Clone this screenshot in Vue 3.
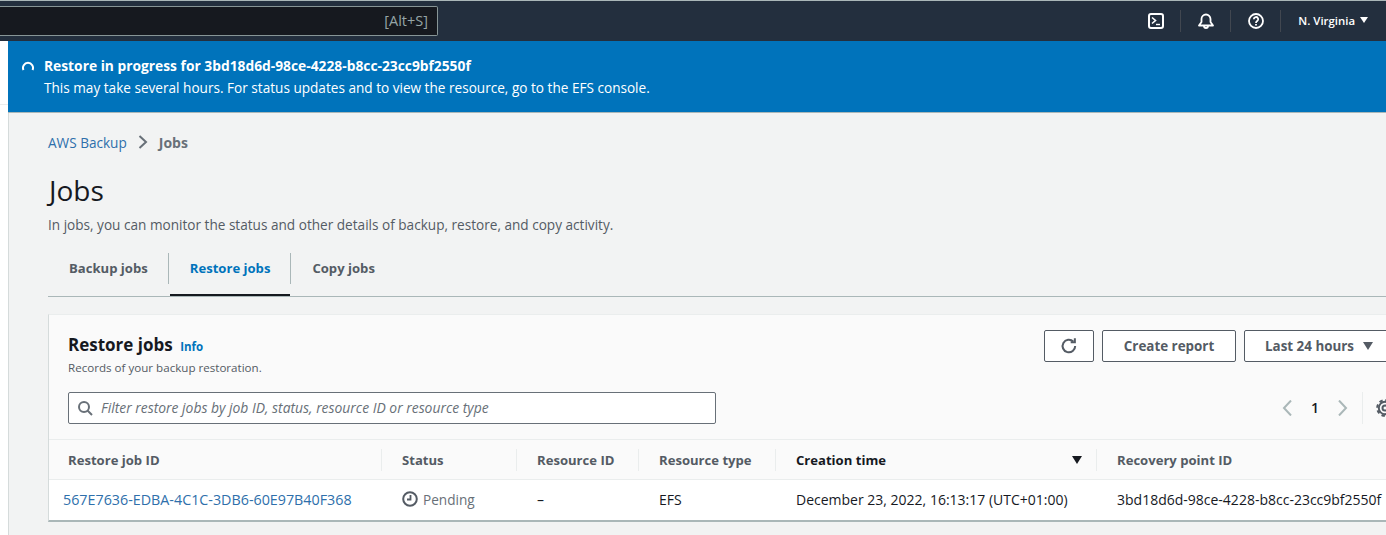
<script setup>
const columns = [
  { label: 'Restore job ID', width: 332 },
  { label: 'Status', width: 135 },
  { label: 'Resource ID', width: 122 },
  { label: 'Resource type', width: 137 },
  { label: 'Creation time', width: 321, sorted: true },
  { label: 'Recovery point ID', width: 300 },
]
const gridColumns = columns.map((c) => c.width + 'px').join(' ')
</script>

<template>
  <div class="page">
    <header class="topbar">
      <div class="search"><span class="shortcut">[Alt+S]</span></div>
      <div class="top-actions">
        <span class="top-icon">
          <svg width="16" height="16" viewBox="0 0 16 16" fill="none" stroke="#fff" stroke-width="2">
            <rect x="1" y="1" width="14" height="14" rx="2" />
            <path d="M4 4.5 7.5 7.5 4 10.5" stroke-width="1.6" />
            <path d="M8 11.5h4" stroke-width="1.4" />
          </svg>
        </span>
        <span class="top-icon">
          <svg width="16" height="16" viewBox="0 0 16 16" fill="none" stroke="#fff" stroke-width="1.8">
            <path d="M1 12.500h14L12.500 9V6a4.500 4.500 0 0 0-9 0v3z" stroke-linejoin="round" />
            <path d="M6 13a2 2 0 0 0 4 0" />
          </svg>
        </span>
        <span class="top-icon">
          <svg width="16" height="16" viewBox="0 0 16 16" fill="none" stroke="#fff" stroke-width="1.8">
            <circle cx="8" cy="8" r="7" />
            <path d="M5.800 6.200a2.200 2.200 0 1 1 3.300 1.900C8.300 8.600 8 9 8 10" />
            <path d="M8 11v1.600" />
          </svg>
        </span>
        <span class="region">N. Virginia <i class="caret"></i></span>
      </div>
    </header>

    <div class="shell">
      <aside class="side"></aside>
      <main class="main">
        <section class="flash">
          <svg class="spinner" width="12" height="12" viewBox="0 0 12 12" fill="none" stroke="#fff" stroke-width="2">
            <path d="M1.500 10A5 5 0 1 1 10.500 10" />
          </svg>
          <div>
            <div class="flash-title">Restore in progress for 3bd18d6d-98ce-4228-b8cc-23cc9bf2550f</div>
            <div class="flash-text">This may take several hours. For status updates and to view the resource, go to the EFS console.</div>
          </div>
        </section>

        <div class="content">
          <nav class="crumbs">
            <a class="crumb-link">AWS Backup</a>
            <svg width="10" height="14" viewBox="0 0 10 14" fill="none" stroke="#687078" stroke-width="2">
              <path d="M1.500 1 8 7l-6.500 6" />
            </svg>
            <span class="crumb-current">Jobs</span>
          </nav>

          <h1>Jobs</h1>
          <p class="lead">In jobs, you can monitor the status and other details of backup, restore, and copy activity.</p>

          <div class="tabs">
            <div class="tab">Backup jobs</div>
            <div class="tab active">Restore jobs</div>
            <div class="tab">Copy jobs</div>
          </div>

          <section class="card">
            <div class="card-head">
              <div>
                <h2>Restore jobs <a class="info">Info</a></h2>
                <p class="card-desc">Records of your backup restoration.</p>
              </div>
              <div class="buttons">
                <button class="btn btn-icon">
                  <svg width="18" height="18" viewBox="0 0 16 16" fill="none" stroke="#545b64" stroke-width="1.8">
                    <path d="M13.500 8a5.600 5.600 0 1 1-1.700-4" />
                    <path d="M13.200 1v3.700H9.500" />
                  </svg>
                </button>
                <button class="btn btn-report">Create report</button>
                <button class="btn btn-range">Last 24 hours <i class="caret dark"></i></button>
              </div>
            </div>

            <div class="filter-row">
              <div class="filter">
                <svg width="16" height="16" viewBox="0 0 16 16" fill="none" stroke="#687078" stroke-width="2">
                  <circle cx="7" cy="7" r="5" />
                  <path d="m10.500 10.500 4.500 4.500" />
                </svg>
                <span>Filter restore jobs by job ID, status, resource ID or resource type</span>
              </div>
              <div class="pager">
                <svg width="12" height="16" viewBox="0 0 12 16" fill="none" stroke="#aab7b8" stroke-width="2"><path d="M10 .5 3 8l7 7.500" /></svg>
                <span class="page-num">1</span>
                <svg width="12" height="16" viewBox="0 0 12 16" fill="none" stroke="#aab7b8" stroke-width="2"><path d="m2 .5 7 7.500-7 7.500" /></svg>
                <span class="pager-sep"></span>
                <svg class="gear" width="18" height="18" viewBox="0 0 18 18" fill="none" stroke="#545b64">
                  <circle cx="9" cy="9" r="2.500" stroke-width="2" />
                  <circle cx="9" cy="9" r="6.200" stroke-width="2" />
                  <circle cx="9" cy="9" r="7.800" stroke-width="2" stroke-dasharray="3.500 2.630" />
                </svg>
              </div>
            </div>

            <div class="table-head" :style="{ gridTemplateColumns: gridColumns }">
              <div v-for="col in columns" :key="col.label" class="th" :class="{ sorted: col.sorted }">
                {{ col.label }}
                <i v-if="col.sorted" class="caret black"></i>
              </div>
            </div>
            <div class="table-row" :style="{ gridTemplateColumns: gridColumns }">
              <div class="td first"><a class="job-link">567E7636-EDBA-4C1C-3DB6-60E97B40F368</a></div>
              <div class="td pending">
                <svg width="16" height="16" viewBox="0 0 16 16" fill="none" stroke="#545b64" stroke-width="2">
                  <circle cx="8" cy="8" r="6.800" />
                  <path d="M8.500 4v4.500H5" stroke-width="1.800" />
                </svg>
                Pending
              </div>
              <div class="td">–</div>
              <div class="td">EFS</div>
              <div class="td">December 23, 2022, 16:13:17 (UTC+01:00)</div>
              <div class="td">3bd18d6d-98ce-4228-b8cc-23cc9bf2550f</div>
            </div>
          </section>
        </div>
      </main>
    </div>
  </div>
</template>

<style>
html,
body {
  margin: 0;
  overflow: hidden;
}
</style>

<style scoped>
.page {
  width: 1386px;
  height: 535px;
  overflow: hidden;
  font-family: "Open Sans", "Noto Sans", sans-serif;
  font-size: 14px;
  color: #16191f;
  background: #fff;
}

.topbar {
  height: 40px;
  border-top: 1px solid #aab7b8;
  background: #232f3e;
  display: flex;
  justify-content: space-between;
  align-items: center;
}

.search {
  width: 438px;
  height: 30px;
  box-sizing: border-box;
  margin-top: -1px;
  background: #16191f;
  border: 1px solid #879596;
  border-left: 0;
  border-radius: 0 2px 2px 0;
  display: flex;
  align-items: center;
  justify-content: flex-end;
  padding-right: 9px;
}

.shortcut {
  color: #95a5a6;
  font-size: 14.500px;
}

.top-actions {
  display: flex;
  align-items: center;
  padding-right: 18px;
}

.top-icon {
  width: 50px;
  height: 22px;
  box-sizing: border-box;
  padding-left: 1px;
  border-right: 1px solid #414750;
  display: flex;
  align-items: center;
  justify-content: center;
}

.region {
  margin-left: 17px;
  margin-top: -2px;
  font-size: 11.400px;
  font-weight: 600;
  color: #fff;
  display: flex;
  align-items: center;
  gap: 5px;
}

.caret {
  width: 0;
  height: 0;
  border-left: 4.500px solid transparent;
  border-right: 4.500px solid transparent;
  border-top: 6px solid #fff;
}

.caret.dark {
  border-left-width: 5.500px;
  border-right-width: 5.500px;
  border-top: 8px solid #545b64;
}

.caret.black {
  border-left-width: 5.500px;
  border-right-width: 5.500px;
  border-top: 8px solid #16191f;
}

.shell {
  display: flex;
  height: 494px;
}

.side {
  width: 8px;
  height: 63px;
  flex: none;
  background: #fff;
  border-bottom: 1px solid #eaeded;
}

.main {
  flex: 1;
  min-width: 0;
  background: #f2f3f3;
  border-left: 1px solid #d5dbdb;
}

.flash {
  margin-left: -1px;
  background: #0073bb;
  border-bottom: 1px solid #aab7b8;
  color: #fff;
  display: flex;
  gap: 10px;
  padding: 14px 0 0 14px;
  height: 57px;
}

.spinner {
  margin-top: 5px;
  flex: none;
}

.flash-title {
  font-size: 13.800px;
  font-weight: 700;
  line-height: 22px;
}

.flash-text {
  font-size: 13.600px;
  line-height: 22px;
}

.content {
  padding: 19px 0 0 39px;
}

.crumbs {
  height: 20px;
  display: flex;
  align-items: center;
  gap: 11px;
}

.crumb-link {
  font-size: 13.600px;
  color: #2e6fab;
}

.crumb-current {
  color: #687078;
  font-weight: 700;
}

h1 {
  margin: 20px 0 0 1px;
  font-size: 28px;
  font-weight: 400;
  line-height: 36px;
}

.lead {
  margin: 7px 0 0;
  font-size: 13.600px;
  line-height: 20px;
  color: #545b64;
}

.tabs {
  margin-top: 10px;
  height: 52px;
  box-sizing: border-box;
  display: flex;
  border-bottom: 1px solid #aab7b8;
  padding-top: 8px;
}

.tab {
  height: 31px;
  line-height: 31px;
  padding: 0 21px;
  font-size: 13.100px;
  font-weight: 700;
  color: #545b64;
}

.tab:first-child {
  padding: 0 20px 0 21px;
}

.tab.active {
  padding: 0 20px 0 21px;
  color: #0073bb;
  border-left: 1px solid #aab7b8;
  border-right: 1px solid #aab7b8;
  position: relative;
}

.tab.active::after {
  content: "";
  position: absolute;
  left: 1px;
  right: 0;
  bottom: -12px;
  height: 2px;
  background: #16191f;
}

.card {
  margin-top: 17px;
  width: 1380px;
  height: 208px;
  box-sizing: border-box;
  background: #fafafa;
  border-top: 1px solid #eaeded;
  border-left: 1px solid #d5dbdb;
  border-bottom: 2px solid #aab7b8;
}

.card-head {
  display: flex;
  justify-content: space-between;
  height: 65px;
  padding: 15px 0 0 19px;
  box-sizing: border-box;
  width: 1336px;
}

h2 {
  margin: 0;
  font-size: 17px;
  font-weight: 700;
  line-height: 29px;
}

.info {
  margin-left: 3px;
  font-size: 11.500px;
  font-weight: 700;
  color: #0073bb;
}

.card-desc {
  margin: -1px 0 0;
  font-size: 11.600px;
  line-height: 16px;
  color: #545b64;
}

.buttons {
  display: flex;
  gap: 8px;
  height: 32px;
}

.btn {
  height: 32px;
  box-sizing: border-box;
  border: 1px solid #545b64;
  border-radius: 2px;
  background: #fff;
  color: #545b64;
  font: 700 13.400px "Open Sans", "Noto Sans", sans-serif;
  display: flex;
  align-items: center;
  justify-content: center;
  padding: 0;
}

.btn-icon {
  width: 50px;
}

.btn-report {
  width: 134px;
}

.btn-range {
  width: 155px;
  gap: 9px;
  margin-right: -14px;
  flex: none;
  justify-content: flex-start;
  padding-left: 20px;
}

.filter-row {
  display: flex;
  justify-content: space-between;
  align-items: center;
  height: 60px;
  box-sizing: border-box;
  padding: 12px 0 16px 19px;
  border-bottom: 1px solid #eaeded;
  width: 1336px;
  position: relative;
}

.filter-row::after {
  content: "";
  position: absolute;
  left: 100%;
  width: 60px;
  bottom: -1px;
  height: 1px;
  background: #eaeded;
}

.filter {
  width: 648px;
  height: 32px;
  box-sizing: border-box;
  background: #fff;
  border: 1px solid #687078;
  border-radius: 2px;
  display: flex;
  align-items: center;
  gap: 8px;
  padding-left: 8px;
  font-size: 13.900px;
  color: #687078;
  font-style: italic;
}

.pager {
  display: flex;
  align-items: center;
  width: 104px;
  flex: none;
}

.pager svg {
  flex: none;
}

.page-num {
  width: 44px;
  flex: none;
  text-align: center;
  font-weight: 600;
}

.pager-sep {
  width: 1px;
  height: 32px;
  background: #eaeded;
  margin: 0 13px;
  flex: none;
}

.table-head,
.table-row {
  display: grid;
}

.table-head {
  height: 39px;
  border-bottom: 1px solid #eaeded;
  align-items: center;
}

.th {
  height: 22px;
  line-height: 22px;
  padding-left: 20px;
  box-sizing: border-box;
  font-size: 13.100px;
  font-weight: 700;
  color: #545b64;
  border-left: 1px solid #eaeded;
  display: flex;
  justify-content: space-between;
  align-items: center;
  padding-right: 14px;
  white-space: nowrap;
}

.th:first-child {
  border-left: 0;
  padding-left: 19px;
}

.th.sorted {
  color: #16191f;
}

.table-row {
  height: 40px;
  box-sizing: border-box;
  padding-bottom: 2px;
  background: #fff;
  align-items: center;
}

.td {
  padding-left: 21px;
  white-space: nowrap;
}

.td.first {
  padding-left: 14px;
}

.job-link {
  font-size: 14.300px;
  color: #2e6fab;
}

.pending {
  display: flex;
  align-items: center;
  gap: 5px;
  font-size: 13.600px;
  color: #687078;
}
</style>
